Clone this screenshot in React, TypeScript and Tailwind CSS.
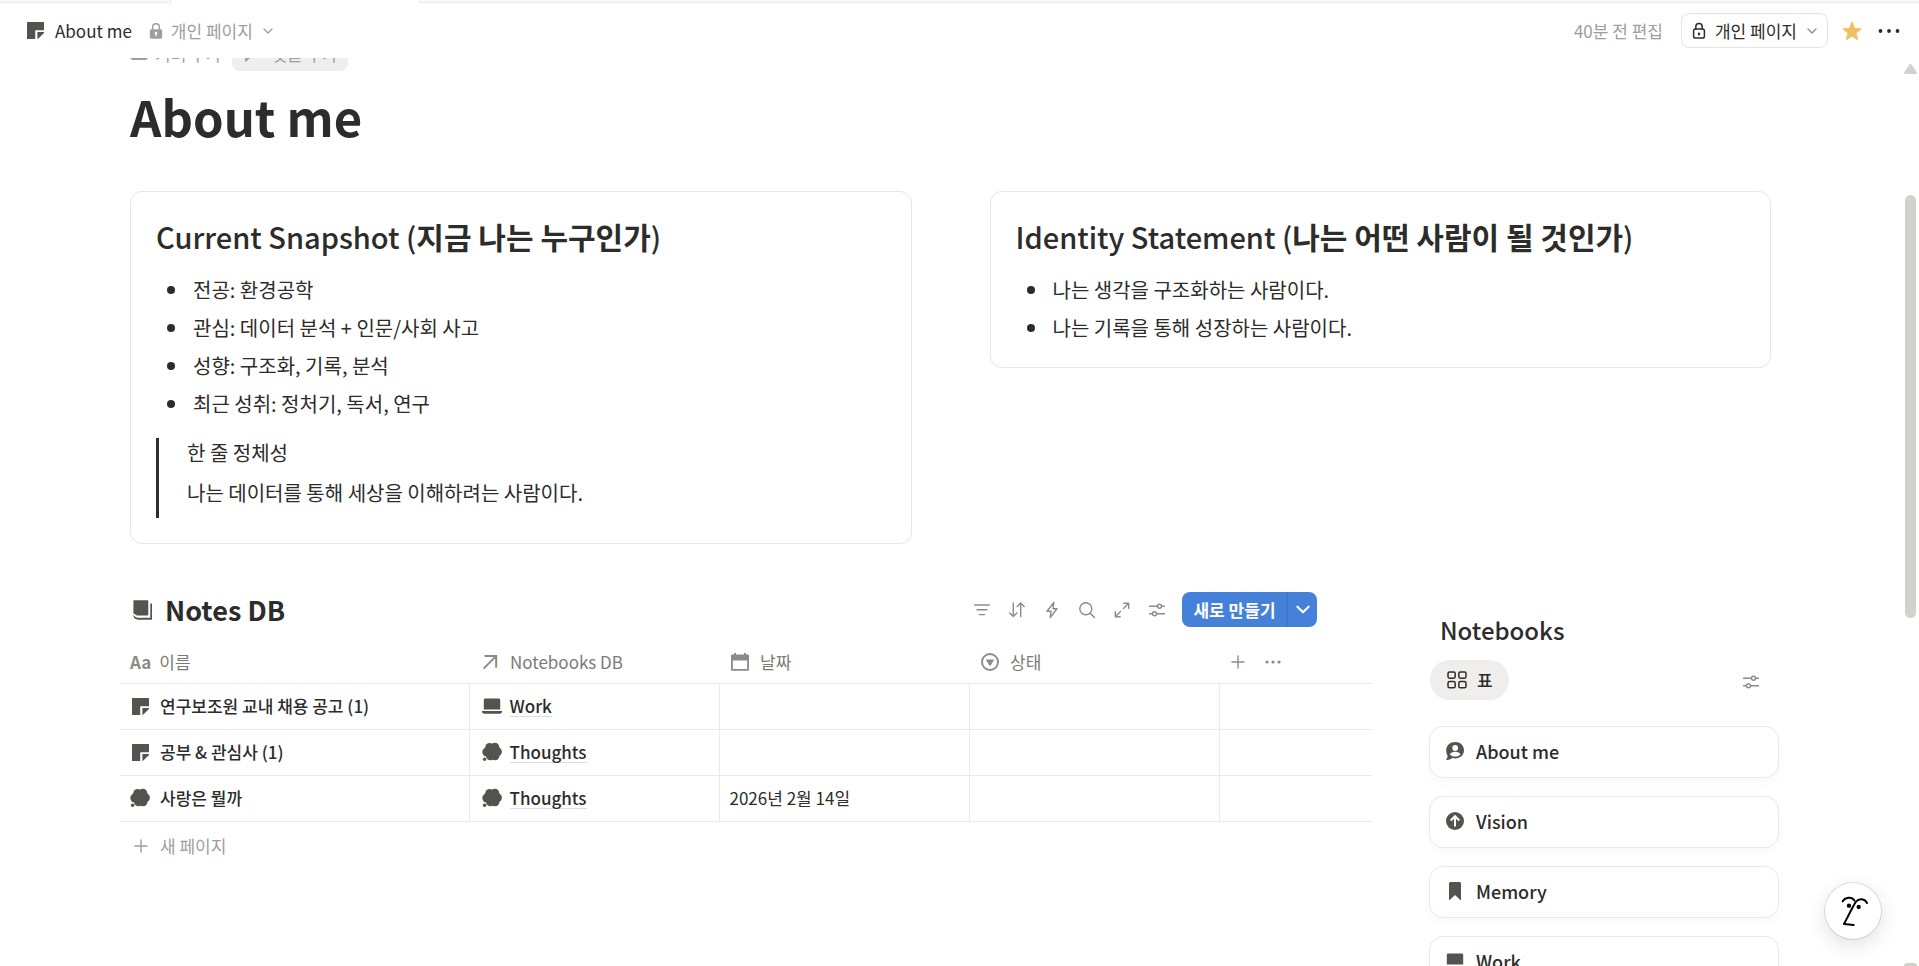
import type { ReactNode, SVGProps } from "react";

type IconProps = SVGProps<SVGSVGElement>;

const stroke = {
  fill: "none",
  stroke: "currentColor",
  strokeLinecap: "round",
  strokeLinejoin: "round",
} as const;

const PageIcon = (p: IconProps) => (
  <svg viewBox="0 0 17 17" width="17" height="17" fill="currentColor" aria-hidden="true" {...p}>
    <path d="M.6 0H16.4a.6.6 0 0 1 .6.6V8.2H8.2V17H.6a.6.6 0 0 1-.6-.6V.6A.6.6 0 0 1 .6 0Z" />
    <path d="M10.4 10H17v.4c0 .4-.2.7-.5 1L11.4 16.500c-.3.300-.6.500-1 .500Z" />
  </svg>
);

const BookIcon = (p: IconProps) => (
  <svg viewBox="0 0 20 20" width="20" height="20" fill="currentColor" aria-hidden="true" {...p}>
    <path d="M.8.200H14.700a.6.6 0 0 1 .6.6V14.700a.8.8 0 0 1-.8.8H3.800L.4 13.200V.6A.4.4 0 0 1 .8.200Z" />
    <path d="M17.300 3.600H19V19.700H5.200C2.200 19.700.4 18 .4 15.300V14.300C1.200 16.500 2.800 17.800 5.200 17.800H17.300Z" />
  </svg>
);

const LaptopIcon = (p: IconProps) => (
  <svg viewBox="0 0 20 17" width="20" height="17" fill="currentColor" aria-hidden="true" {...p}>
    <path d="M3.300.5H16.700C17.600.5 18.200 1.100 18.200 2V11.500H1.800V2C1.800 1.100 2.400.5 3.300.5Z" />
    <path d="M0 13H20V13.600C20 14.900 19.100 15.700 17.900 15.700H2.100C.9 15.700 0 14.900 0 13.600Z" />
  </svg>
);

const ThoughtIcon = (p: IconProps) => (
  <svg viewBox="0 0 20 20" width="20" height="20" fill="currentColor" aria-hidden="true" {...p}>
    <circle cx="7.600" cy="5.400" r="4.400" />
    <circle cx="12.900" cy="5.200" r="4.400" />
    <circle cx="15.300" cy="9.800" r="4.600" />
    <circle cx="4.900" cy="9.900" r="4.600" />
    <circle cx="8.400" cy="13.900" r="4.400" />
    <circle cx="13" cy="13.700" r="4.500" />
    <circle cx="10" cy="9.500" r="6" />
    <circle cx="2.600" cy="17.200" r="1.700" />
  </svg>
);

const LockSolid = (p: IconProps) => (
  <svg viewBox="0 0 14 18" width="14" height="18" aria-hidden="true" {...p}>
    <path d="M3.600 8V5.200a3.400 3.400 0 0 1 6.800 0V8" fill="none" stroke="currentColor" strokeWidth="1.400" />
    <path
      fill="currentColor"
      fillRule="evenodd"
      d="M2.500 7.300h9A1.700 1.700 0 0 1 13.200 9v6a1.700 1.700 0 0 1-1.700 1.700h-9A1.700 1.700 0 0 1 .8 15V9A1.700 1.700 0 0 1 2.500 7.300ZM7 9.800a1.300 1.300 0 0 0-.7 2.400V14h1.400v-1.800A1.300 1.300 0 0 0 7 9.800Z"
    />
  </svg>
);

const LockOutline = (p: IconProps) => (
  <svg viewBox="0 0 14 18" width="14" height="18" {...stroke} strokeWidth="1.500" aria-hidden="true" {...p}>
    <path d="M3.800 7V4.800a3.200 3.200 0 0 1 6.400 0V7" />
    <rect x="1.600" y="7" width="10.800" height="9" rx="1.800" />
    <path d="M7 11.500v1" strokeWidth="2.200" />
  </svg>
);

const ChevronDown = (p: IconProps) => (
  <svg viewBox="0 0 10 6" width="10" height="6" {...stroke} strokeWidth="1.300" aria-hidden="true" {...p}>
    <path d="m1 1 4 4 4-4" />
  </svg>
);

const DotsIcon = (p: IconProps) => (
  <svg viewBox="0 0 22 4" width="22" height="4" fill="currentColor" aria-hidden="true" {...p}>
    <circle cx="2.500" cy="2" r="1.900" />
    <circle cx="11" cy="2" r="1.900" />
    <circle cx="19.500" cy="2" r="1.900" />
  </svg>
);

const SmallDots = (p: IconProps) => (
  <svg viewBox="0 0 16 4" width="16" height="4" fill="currentColor" aria-hidden="true" {...p}>
    <circle cx="2" cy="2" r="1.600" />
    <circle cx="8" cy="2" r="1.600" />
    <circle cx="14" cy="2" r="1.600" />
  </svg>
);

const PlusIcon = (p: IconProps) => (
  <svg viewBox="0 0 14 14" width="14" height="14" {...stroke} strokeWidth="1.400" aria-hidden="true" {...p}>
    <path d="M7 1v12M1 7h12" />
  </svg>
);

const StarIcon = (p: IconProps) => (
  <svg viewBox="0 0 20 20" width="20" height="20" fill="currentColor" aria-hidden="true" {...p}>
    <path d="M10 .6c.3 0 .5.200.6.500l2.200 5.900 6.100.3c.6 0 .8.700.4 1l-4.800 3.900 1.600 6c.1.600-.4 1-.9.700L10 15.500l-5.200 3.400c-.5.300-1-.1-.9-.7l1.600-6L.7 8.300c-.4-.3-.2-1 .4-1l6.100-.3L9.400 1.100c.1-.3.300-.5.600-.5Z" />
  </svg>
);

const FilterIcon = () => (
  <svg viewBox="0 0 18 18" width="18" height="18" {...stroke} strokeWidth="1.400" aria-hidden="true">
    <path d="M1.700 4h14.600M4 8.800h10M6.300 13.600h5.400" />
  </svg>
);

const SortIcon = () => (
  <svg viewBox="0 0 18 18" width="18" height="18" {...stroke} strokeWidth="1.400" aria-hidden="true">
    <path d="M5.300 2v13.500M1.800 12l3.500 3.500L8.800 12M12.700 15.500V2M9.200 5.500 12.700 2l3.500 3.500" />
  </svg>
);

const BoltIcon = () => (
  <svg viewBox="0 0 18 18" width="18" height="18" {...stroke} strokeWidth="1.400" aria-hidden="true">
    <path d="M10.800 1.500 4 10.200h4L7.200 16.500 14 7.800h-4Z" />
  </svg>
);

const SearchIcon = () => (
  <svg viewBox="0 0 18 18" width="18" height="18" {...stroke} strokeWidth="1.400" aria-hidden="true">
    <circle cx="7.800" cy="7.800" r="6" />
    <path d="m12.200 12.200 4.300 4.300" />
  </svg>
);

const ExpandIcon = () => (
  <svg viewBox="0 0 18 18" width="18" height="18" {...stroke} strokeWidth="1.400" aria-hidden="true">
    <path d="M10.800 2.300h4.900v4.900M15.700 2.300l-5.200 5.200M7.200 15.700H2.300v-4.900M2.300 15.700l5.200-5.200" />
  </svg>
);

const SlidersIcon = () => (
  <svg viewBox="0 0 18 18" width="18" height="18" {...stroke} strokeWidth="1.400" aria-hidden="true">
    <path d="M1.500 5.200h7.900M13.600 5.200h2.900M1.500 12.800h2.900M8.600 12.800h7.900" />
    <circle cx="11.500" cy="5.200" r="2" />
    <circle cx="6.500" cy="12.800" r="2" />
  </svg>
);

const ArrowIcon = () => (
  <svg viewBox="0 0 18 18" width="18" height="18" fill="none" stroke="currentColor" strokeWidth="2" aria-hidden="true">
    <path d="M3.500 3h11.700v11.700M14.800 3.400 2.600 15.600" />
  </svg>
);

const CalendarIcon = () => (
  <svg viewBox="0 0 18 18" width="18" height="18" fill="currentColor" aria-hidden="true">
    <path
      fillRule="evenodd"
      d="M3 0h2v1.500h8V0h2v1.500h1.800c.7 0 1.200.5 1.200 1.200v13.800c0 .7-.5 1.200-1.200 1.200H1.200C.5 17.700 0 17.200 0 16.500V2.700c0-.7.5-1.200 1.200-1.200H3ZM1.800 7.600v8.300h14.400V7.600Z"
    />
  </svg>
);

const StatusIcon = () => (
  <svg viewBox="0 0 18 18" width="18" height="18" aria-hidden="true">
    <circle cx="9" cy="9" r="8" fill="none" stroke="currentColor" strokeWidth="1.900" />
    <path d="M5.600 6.500h6.800c.5 0 .7.400.5.800l-3.300 5.100c-.3.500-.9.500-1.200 0L5.100 7.300c-.2-.4 0-.8.500-.8Z" fill="currentColor" />
  </svg>
);

const GridIcon = () => (
  <svg viewBox="0 0 20 18" width="20" height="18" {...stroke} strokeWidth="1.500" aria-hidden="true">
    <rect x="1" y="1" width="7.200" height="6.200" rx="1.600" />
    <rect x="11.800" y="1" width="7.200" height="6.200" rx="1.600" />
    <rect x="1" y="10.600" width="7.200" height="6.200" rx="1.600" />
    <rect x="11.800" y="10.600" width="7.200" height="6.200" rx="1.600" />
  </svg>
);

const PersonBubbleIcon = () => (
  <svg viewBox="0 0 18 18" width="18" height="18" aria-hidden="true">
    <path
      fill="currentColor"
      d="M9.200 0C14.200 0 18 3.500 18 8.300s-3.800 8.200-8.800 8.200c-1.100 0-2-.1-2.900-.4-1.400 1.200-3.300 1.900-5.400 1.900-.7 0-.9-.6-.5-1.100.8-.8 1.200-2 1.200-3.200C.6 12.300.2 10.400.2 8.300.2 3.500 4.200 0 9.200 0Z"
    />
    <circle cx="9.200" cy="6" r="2.900" fill="#fff" />
    <path d="M3.900 12.500c.7-1.900 2.700-2.700 5.300-2.700s4.600.8 5.300 2.700c-1.100 1.300-3 2.100-5.300 2.100s-4.200-.8-5.300-2.100Z" fill="#fff" />
  </svg>
);

const UpCircleIcon = () => (
  <svg viewBox="0 0 18 18" width="18" height="18" aria-hidden="true">
    <circle cx="9" cy="9" r="9" fill="currentColor" />
    <path d="M9 14.500V4.500M4.700 8.500 9 4.200l4.300 4.300" fill="none" stroke="#fff" strokeWidth="2" />
  </svg>
);

const BookmarkIcon = () => (
  <svg viewBox="0 0 18 18" width="18" height="18" fill="currentColor" aria-hidden="true">
    <path d="M4.500 0h9C14.400 0 15 .6 15 1.500V17.600c0 .4-.4.500-.7.300L9 13l-5.300 4.900c-.3.200-.7.100-.7-.3V1.500C3 .6 3.600 0 4.500 0Z" />
  </svg>
);

const CoverIcon = () => (
  <svg viewBox="0 0 18 14" width="18" height="14" {...stroke} strokeWidth="1.800" aria-hidden="true">
    <rect x="1" y="1" width="16" height="11" rx="1.800" />
    <path d="m3 10 3.500-4.500 3 3 2-2L15 10Z" fill="currentColor" stroke="none" />
  </svg>
);

const CommentIcon = () => (
  <svg viewBox="0 0 18 16" width="18" height="16" fill="currentColor" aria-hidden="true">
    <path d="M2.500 0h13A2.500 2.500 0 0 1 18 2.500v7a2.500 2.500 0 0 1-2.500 2.500H8l-4 3.800c-.3.300-.8.100-.8-.4V12h-.7A2.500 2.500 0 0 1 0 9.500v-7A2.500 2.500 0 0 1 2.500 0Z" />
  </svg>
);

const FaceIcon = () => (
  <svg viewBox="76 70 168 168" width="56" height="56" {...stroke} strokeWidth="6" aria-hidden="true">
    <path d="M129 125c7-13 27-15 35-3" />
    <path d="M202 130c-6-14-24-15-33-4-6 8-22 40-36 67l29 3" />
    <circle cx="148" cy="138" r="6.500" fill="currentColor" stroke="none" />
    <circle cx="177" cy="142" r="6.500" fill="currentColor" stroke="none" />
  </svg>
);

function Card({ latin, korean, children }: { latin: string; korean: string; children: ReactNode }) {
  return (
    <section className="rounded-[12px] border border-[#e6e5e3] px-[25px] pt-6 pb-5">
      <h2 className="text-[29px] leading-10 font-medium">
        {latin} (<span className="text-3xl leading-10 font-bold">{korean}</span>)
      </h2>
      {children}
    </section>
  );
}

function Bullets({ items }: { items: string[] }) {
  return (
    <ul className="mt-[15px] pl-[11px]">
      {items.map((item) => (
        <li key={item} className="flex items-center gap-[18px] text-xl leading-[38px]">
          <span className="size-2 shrink-0 rounded-full bg-[#2c2c2b]" />
          {item}
        </li>
      ))}
    </ul>
  );
}

const tools: { label: string; icon: ReactNode }[] = [
  { label: "필터", icon: <FilterIcon /> },
  { label: "정렬", icon: <SortIcon /> },
  { label: "자동화", icon: <BoltIcon /> },
  { label: "검색", icon: <SearchIcon /> },
  { label: "전체 페이지로 열기", icon: <ExpandIcon /> },
  { label: "설정", icon: <SlidersIcon /> },
];

const rows: { icon: ReactNode; name: string; linkIcon: ReactNode; link: string; date: string }[] = [
  { icon: <PageIcon />, name: "연구보조원 교내 채용 공고 (1)", linkIcon: <LaptopIcon />, link: "Work", date: "" },
  { icon: <PageIcon />, name: "공부 & 관심사 (1)", linkIcon: <ThoughtIcon />, link: "Thoughts", date: "" },
  { icon: <ThoughtIcon />, name: "사랑은 뭘까", linkIcon: <ThoughtIcon />, link: "Thoughts", date: "2026년 2월 14일" },
];

const notebooks: { icon: ReactNode; name: string }[] = [
  { icon: <PersonBubbleIcon />, name: "About me" },
  { icon: <UpCircleIcon />, name: "Vision" },
  { icon: <BookmarkIcon />, name: "Memory" },
  { icon: <LaptopIcon />, name: "Work" },
];

function Th({ icon, label }: { icon: ReactNode; label: string }) {
  return (
    <th scope="col" className="h-[42px] p-0 pl-3 text-left font-normal">
      <span className="flex items-center gap-[11px]">
        <span className="flex w-[18px] shrink-0 justify-center text-[#8e8b86]">{icon}</span>
        {label}
      </span>
    </th>
  );
}

function NotesDb() {
  return (
    <section className="min-w-0 flex-1">
      <div className="flex h-[35px] items-center pr-[55px] pl-[13px]">
        <BookIcon className="text-[#55534e]" />
        <h2 className="ml-3 text-[27px] leading-9 font-bold">Notes DB</h2>
        <div className="ml-auto flex text-[#8e8b86]">
          {tools.map((t) => (
            <button key={t.label} type="button" aria-label={t.label} className="flex size-[35px] items-center justify-center">
              {t.icon}
            </button>
          ))}
        </div>
        <div className="ml-2 flex h-[35px] overflow-hidden rounded-lg bg-[#4581d9] text-white">
          <button type="button" className="w-[105px] text-[17px] leading-[34px] font-bold">
            새로 만들기
          </button>
          <button
            type="button"
            aria-label="새로 만들기 옵션"
            className="flex w-[30px] items-center justify-center border-l border-[#3d74c4]"
          >
            <ChevronDown width="14" height="9" strokeWidth="1.500" />
          </button>
        </div>
      </div>

      <table className="mt-3.5 w-full table-fixed border-collapse text-[17px] leading-6">
        <colgroup>
          <col className="w-[349px]" />
          <col className="w-[250px]" />
          <col className="w-[250px]" />
          <col className="w-[250px]" />
          <col />
        </colgroup>
        <thead>
          <tr className="border-b border-[#ebeae8] text-[#7d7a75]">
            <th scope="col" className="h-[42px] p-0 pl-2.5 text-left font-normal">
              <span className="flex items-center gap-2">
                <span className="font-bold text-[#8e8b86]" aria-hidden="true">
                  Aa
                </span>
                이름
              </span>
            </th>
            <Th icon={<ArrowIcon />} label="Notebooks DB" />
            <Th icon={<CalendarIcon />} label="날짜" />
            <Th icon={<StatusIcon />} label="상태" />
            <th className="h-[42px] p-0 pl-3 font-normal text-[#8e8b86]">
              <span className="flex items-center gap-5">
                <button type="button" aria-label="속성 추가">
                  <PlusIcon />
                </button>
                <button type="button" aria-label="속성 더 보기">
                  <SmallDots />
                </button>
              </span>
            </th>
          </tr>
        </thead>
        <tbody>
          {rows.map((r) => (
            <tr key={r.name} className="border-b border-[#ebeae8]">
              <td className="h-[46px] border-r border-[#ebeae8] p-0 pl-2.5">
                <a href="#page" className="flex items-center gap-2.5 font-medium">
                  <span className="flex w-5 shrink-0 justify-center text-[#55534e]">{r.icon}</span>
                  {r.name}
                </a>
              </td>
              <td className="h-[46px] border-r border-[#ebeae8] p-0 pl-3">
                <a href="#notebook" className="flex items-center gap-2 font-medium">
                  <span className="flex w-5 shrink-0 justify-center text-[#55534e]">{r.linkIcon}</span>
                  <span className="border-b border-[#dddcda] leading-5">{r.link}</span>
                </a>
              </td>
              <td className="h-[46px] border-r border-[#ebeae8] p-0 pl-2.5">{r.date}</td>
              <td className="h-[46px] border-r border-[#ebeae8] p-0" />
              <td className="h-[46px] p-0" />
            </tr>
          ))}
        </tbody>
      </table>
      <button type="button" className="flex h-12 items-center gap-3 pl-3.5 text-[17px] leading-6 text-[#a19e99]">
        <PlusIcon />새 페이지
      </button>
    </section>
  );
}

function Notebooks() {
  return (
    <section className="w-[350px] shrink-0 pt-5">
      <h2 className="pl-[11px] text-2xl leading-9 font-medium">Notebooks</h2>
      <div className="mt-3 flex h-10 items-center justify-between pl-px">
        <button
          type="button"
          className="flex h-10 items-center gap-2.5 rounded-full bg-[#efeeec] pr-4 pl-[17px] text-[17px] leading-6 font-medium"
        >
          <GridIcon />표
        </button>
        <button type="button" aria-label="보기 설정" className="mt-1 mr-[19px] text-[#8e8b86]">
          <SlidersIcon />
        </button>
      </div>
      <ul className="mt-[26px] flex flex-col gap-[18px]">
        {notebooks.map((n) => (
          <li key={n.name}>
            <a
              href="#notebook"
              className="flex h-[52px] items-center gap-[11px] rounded-[14px] border border-[#e9e8e6] px-[15px] pb-0.5 text-[18px] leading-6 font-medium shadow-[0_5px_10px_rgba(0,0,0,0.025)]"
            >
              <span className="flex w-5 shrink-0 justify-center text-[#55534e]">{n.icon}</span>
              {n.name}
            </a>
          </li>
        ))}
      </ul>
    </section>
  );
}

export default function App() {
  return (
    <div className="flex h-screen flex-col overflow-hidden bg-white font-['Noto_Sans_CJK_KR',sans-serif] text-[#2c2c2b]">
      <div className="flex h-[3px] shrink-0" aria-hidden="true">
        <div className="w-[171px] border-r border-b border-[#ebeae7] bg-[#f9f8f7]" />
        <div className="w-[248px]" />
        <div className="flex-1 border-b border-l border-[#ebeae7] bg-[#f9f8f7]" />
      </div>

      <header className="relative z-10 flex h-[55px] shrink-0 items-center bg-white pr-[19px] pl-[27px] text-[17px] leading-6">
        <PageIcon className="text-[#55534e]" />
        <a href="#page" className="ml-[11px]">
          About me
        </a>
        <button type="button" className="ml-[17px] flex items-center text-[#a19e99]">
          <LockSolid />
          <span className="ml-2">개인 페이지</span>
          <ChevronDown className="ml-2.5" />
        </button>
        <span className="ml-auto text-[#a19e99]">40분 전 편집</span>
        <button type="button" className="ml-[18px] flex h-[35px] items-center rounded-lg border border-[#e4e3e1] px-[10px]">
          <LockOutline />
          <span className="ml-[9px]">개인 페이지</span>
          <ChevronDown className="ml-2.5 text-[#8e8b86]" />
        </button>
        <button type="button" aria-label="즐겨찾기" className="ml-3.5 text-[#efc160]">
          <StarIcon />
        </button>
        <button type="button" aria-label="더 보기" className="ml-4">
          <DotsIcon />
        </button>
      </header>

      <div className="flex min-h-0 flex-1">
        <main className="min-w-0 flex-1 overflow-hidden pr-[131px] pl-[130px]">
          <div className="-mt-[22px] flex h-[35px] items-center text-[17px] leading-6 text-[#a19e99]">
            <button type="button" className="flex items-center gap-[7px]">
              <CoverIcon />
              커버 추가
            </button>
            <button type="button" className="ml-[11px] flex h-[35px] items-center gap-[11px] rounded-lg bg-[#efeeec] px-2.5">
              <CommentIcon />
              댓글 추가
            </button>
          </div>
          <h1 className="mt-[15px] text-[49px] leading-[60px] font-bold">About me</h1>

          <div className="mt-[45px] grid grid-cols-2 items-start gap-[78px]">
            <Card latin="Current Snapshot" korean="지금 나는 누구인가">
              <Bullets
                items={["전공: 환경공학", "관심: 데이터 분석 + 인문/사회 사고", "성향: 구조화, 기록, 분석", "최근 성취: 정처기, 독서, 연구"]}
              />
              <blockquote className="mt-[15px] mb-[5px] flex flex-col gap-2.5 border-l-3 border-[#2c2c2b] pb-2.5 pl-7 text-xl leading-[30px]">
                <p>한 줄 정체성</p>
                <p>나는 데이터를 통해 세상을 이해하려는 사람이다.</p>
              </blockquote>
            </Card>
            <Card latin="Identity Statement" korean="나는 어떤 사람이 될 것인가">
              <Bullets items={["나는 생각을 구조화하는 사람이다.", "나는 기록을 통해 성장하는 사람이다."]} />
            </Card>
          </div>

          <div className="mt-12 -mr-2 -ml-[10px] flex gap-[57px]">
            <NotesDb />
            <Notebooks />
          </div>
        </main>

        <div className="flex w-[17px] shrink-0 flex-col items-center pt-1.5" aria-hidden="true">
          <svg viewBox="0 0 13 10" width="13" height="10" fill="#d3d1cb">
            <path d="M5.500.6a1.300 1.300 0 0 1 2 0L12.700 8c.5.900.1 2-.9 2H1.200c-1 0-1.400-1.100-.9-2Z" />
          </svg>
          <div className="flex-121" />
          <div className="w-[11px] flex-423 rounded-full bg-[#d3d1cb]" />
          <div className="flex-345" />
          <div className="h-[3px] w-[13px] rounded-t-sm bg-[#d3d1cb]" />
        </div>
      </div>

      <button
        type="button"
        aria-label="AI 도우미"
        className="fixed right-[38px] bottom-[27px] z-20 size-14 rounded-full bg-white text-black shadow-[0_0_0_1px_rgba(0,0,0,0.12),0_6px_20px_rgba(0,0,0,0.12)]"
      >
        <FaceIcon />
      </button>
    </div>
  );
}
